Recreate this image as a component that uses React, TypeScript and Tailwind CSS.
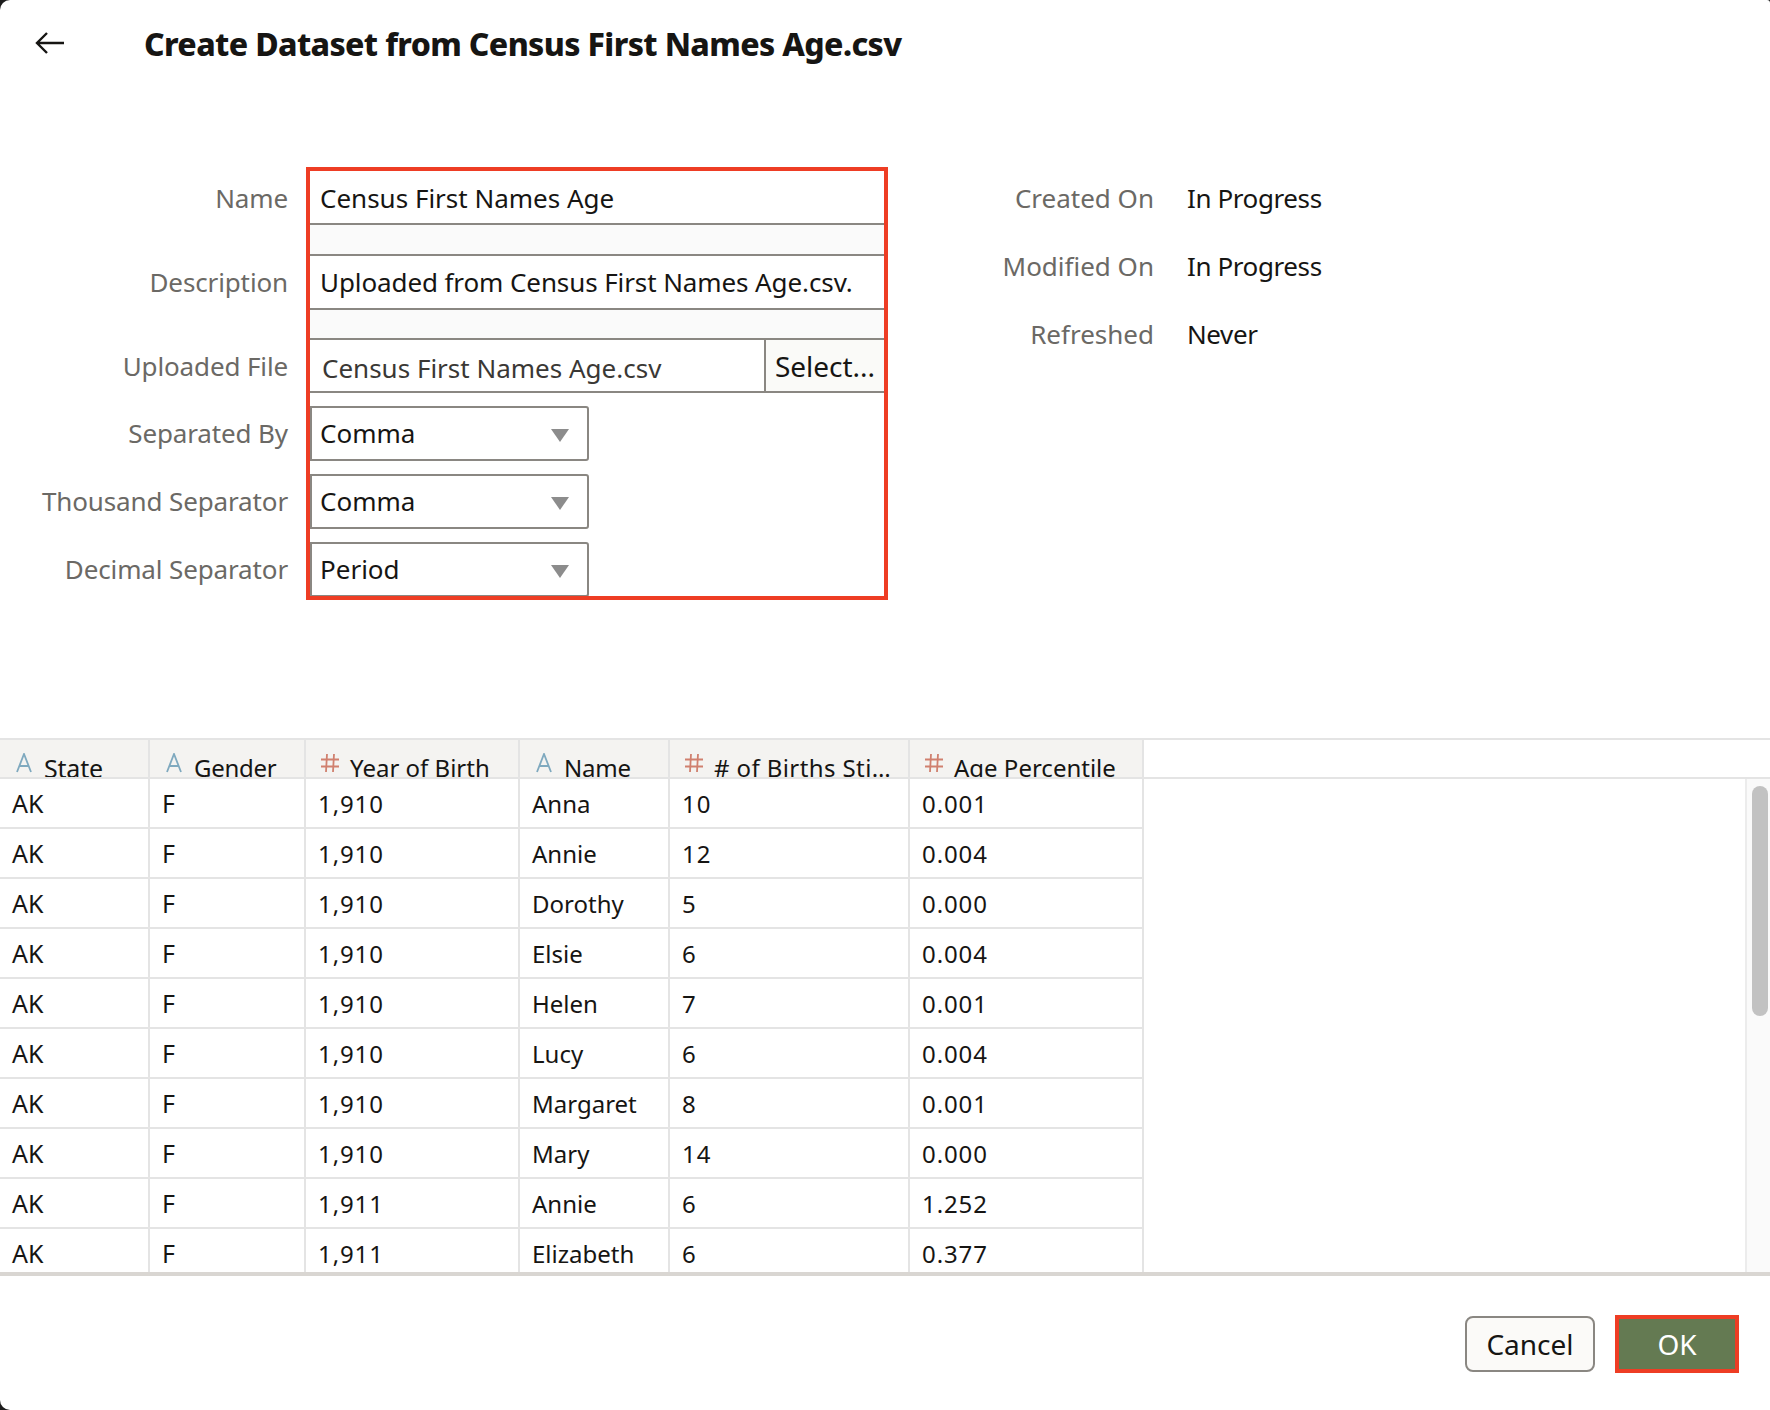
import React from 'react';

const fontStack = 'font-["Noto_Sans","Open_Sans",sans-serif]';

const columns = [
  { title: 'State', type: 'text', cls: 'text-[25px] tracking-[-0.2px]' },
  { title: 'Gender', type: 'text', cls: 'text-[24px] tracking-[-0.3px]' },
  { title: 'Year of Birth', type: 'number', cls: 'text-[24px]' },
  { title: 'Name', type: 'text', cls: 'text-[24px] tracking-[-0.2px]' },
  { title: '# of Births Sti…', type: 'number', cls: 'text-[24px] tracking-[0.4px]' },
  { title: 'Age Percentile', type: 'number', cls: 'text-[24px]' },
];

const rows = [
  ['AK', 'F', '1,910', 'Anna', '10', '0.001'],
  ['AK', 'F', '1,910', 'Annie', '12', '0.004'],
  ['AK', 'F', '1,910', 'Dorothy', '5', '0.000'],
  ['AK', 'F', '1,910', 'Elsie', '6', '0.004'],
  ['AK', 'F', '1,910', 'Helen', '7', '0.001'],
  ['AK', 'F', '1,910', 'Lucy', '6', '0.004'],
  ['AK', 'F', '1,910', 'Margaret', '8', '0.001'],
  ['AK', 'F', '1,910', 'Mary', '14', '0.000'],
  ['AK', 'F', '1,911', 'Annie', '6', '1.252'],
  ['AK', 'F', '1,911', 'Elizabeth', '6', '0.377'],
];

const gridCols = 'grid grid-cols-[150px_156px_214px_150px_240px_234px]';
const cellText = [
  'text-[25px]',
  'text-[25px]',
  'text-[24px] tracking-[0.9px]',
  'text-[24px]',
  'text-[24px] tracking-[0.9px]',
  'text-[24px] tracking-[0.9px]',
];

function TypeIcon({ type }: { type: string }) {
  if (type === 'number') {
    return (
      <svg width="20" height="20" viewBox="0 0 20 20" fill="none" stroke="#d0806f" strokeWidth="1.8" className="shrink-0">
        <path d="M7 1 L6 19 M14 1 L13 19 M1 6.5 H19 M1 13.5 H19" />
      </svg>
    );
  }
  return (
    <svg width="20" height="20" viewBox="0 0 20 20" fill="none" stroke="#7fa9bf" strokeWidth="1.8" className="shrink-0">
      <path d="M3 19 L10 1 L17 19 M5.5 13 H14.5" />
    </svg>
  );
}

function Select({ value }: { value: string }) {
  return (
    <div className="flex h-[55px] w-[279px] items-center justify-between rounded-r-[3px] border-2 border-[#8a8782] bg-white pl-[8px] pr-[18px]">
      <span>{value}</span>
      <svg width="18" height="13" viewBox="0 0 18 13" className="mt-[3px]">
        <path d="M0 0 H18 L9 13 Z" fill="#8c8c8c" />
      </svg>
    </div>
  );
}

function Meta({ label, value }: { label: string; value: string }) {
  return (
    <div className="flex h-[68px] items-center">
      <div className="w-[266px] text-right text-[#6b6965]">{label}</div>
      <div className="ml-[33px] tracking-[-0.4px]">{value}</div>
    </div>
  );
}

export default function App() {
  return (
    <div className={`h-[1410px] w-[1770px] overflow-hidden bg-[#1d1d1d] text-[26px] text-[#161513] ${fontStack}`}>
      <div className="flex h-full flex-col overflow-hidden rounded-l-[10px] rounded-tr-[3px] bg-white">
        <div className="flex h-[167px] shrink-0 items-start">
          <svg width="30" height="26" viewBox="0 0 30 26" fill="none" stroke="#161513" strokeWidth="2.4" className="ml-[34px] mt-[30px]">
            <path d="M30 13 H3 M13 3 L3 13 L13 23" />
          </svg>
          <h1 className="ml-[80px] mt-[23px] text-[32px] leading-[42px] font-extrabold tracking-[-0.63px] text-[#161513]">
            Create Dataset from Census First Names Age.csv
          </h1>
        </div>

        <div className="flex h-[571px] shrink-0 items-start">
          <div className="w-[288px] pt-[4px] text-right tracking-[-0.13px] text-[#6b6965]">
            <div className="flex h-[54px] items-center justify-end">Name</div>
            <div className="mt-[30px] flex h-[54px] items-center justify-end">Description</div>
            <div className="mt-[30px] flex h-[54px] items-center justify-end">Uploaded File</div>
            <div className="mt-[13px] flex h-[54px] items-center justify-end">Separated By</div>
            <div className="mt-[14px] flex h-[54px] items-center justify-end">Thousand Separator</div>
            <div className="mt-[14px] flex h-[54px] items-center justify-end">Decimal Separator</div>
          </div>

          <div className="ml-[18px] h-[433px] w-[582px] shrink-0 overflow-hidden border-4 border-[#ee3d24] bg-white">
            <div className="flex h-[54px] items-center border-b-2 border-[#8a8782] bg-white pl-[10px] pt-[2px]">
              Census First Names Age
            </div>
            <div className="h-[29px] bg-[#fafafa]" />
            <div className="flex h-[56px] items-center border-y-2 border-[#8a8782] bg-white pl-[10px] tracking-[-0.1px]">
              Uploaded from Census First Names Age.csv.
            </div>
            <div className="h-[28px] bg-[#fafafa]" />
            <div className="flex h-[55px] border-y-2 border-[#8a8782] bg-white">
              <div className="flex flex-1 items-center pl-[12px] pt-[5px] text-[#3a3835]">Census First Names Age.csv</div>
              <div className="flex w-[120px] items-center justify-center border-l-2 border-[#8a8782] bg-[#fafaf8] text-[28px]">Select...</div>
            </div>
            <div className="mt-[13px] flex flex-col gap-[13px]">
              <Select value="Comma" />
              <Select value="Comma" />
              <Select value="Period" />
            </div>
          </div>

          <div className="-mt-[3px]">
            <Meta label="Created On" value="In Progress" />
            <Meta label="Modified On" value="In Progress" />
            <Meta label="Refreshed" value="Never" />
          </div>
        </div>

        <div className="flex h-[538px] shrink-0 flex-col overflow-hidden border-b-4 border-[#d9d6d2] border-t-2 border-t-[#e4e4e4]">
          <div className="h-[39px] shrink-0 overflow-hidden border-b-2 border-[#e4e4e4]">
            <div className={gridCols}>
              {columns.map((c) => (
                <div key={c.title} className="flex h-[39px] gap-[10px] border-r-2 border-[#e4e4e4] bg-[#f4f3f1] pl-[14px] pt-[13px] whitespace-nowrap">
                  <TypeIcon type={c.type} />
                  <span className={`-mt-[1px] leading-[32px] ${c.cls}`}>{c.title}</span>
                </div>
              ))}
            </div>
          </div>
          <div className="flex min-h-0 flex-1">
            <div className="min-w-0 flex-1 overflow-hidden border-r-2 border-[#ececec]">
              {rows.map((r, i) => (
                <div key={i} className="w-[1144px] border-b-2 border-[#e4e4e4]">
                  <div className={gridCols}>
                    {r.map((v, j) => (
                      <div key={j} className={`flex h-[48px] items-center border-r-2 border-[#e4e4e4] pl-[12px] pt-[2px] ${cellText[j]}`}>
                        {v}
                      </div>
                    ))}
                  </div>
                </div>
              ))}
            </div>
            <div className="w-[23px] shrink-0 bg-[#fafafa] pl-[5px] pt-[7px]">
              <div className="h-[230px] w-[16px] rounded-full bg-[#c2c2c2]" />
            </div>
          </div>
        </div>

        <div className="flex flex-1 items-start justify-end gap-[20px] pr-[31px] pt-[39px] text-[28px]">
          <button className="mt-[1px] h-[56px] w-[130px] rounded-[8px] border-2 border-[#8a8782] bg-[#fbfaf8] text-[#161513]">Cancel</button>
          <button className="h-[58px] w-[124px] border-4 border-[#ee3d24] bg-[#647a52] text-white">OK</button>
        </div>
      </div>
    </div>
  );
}
